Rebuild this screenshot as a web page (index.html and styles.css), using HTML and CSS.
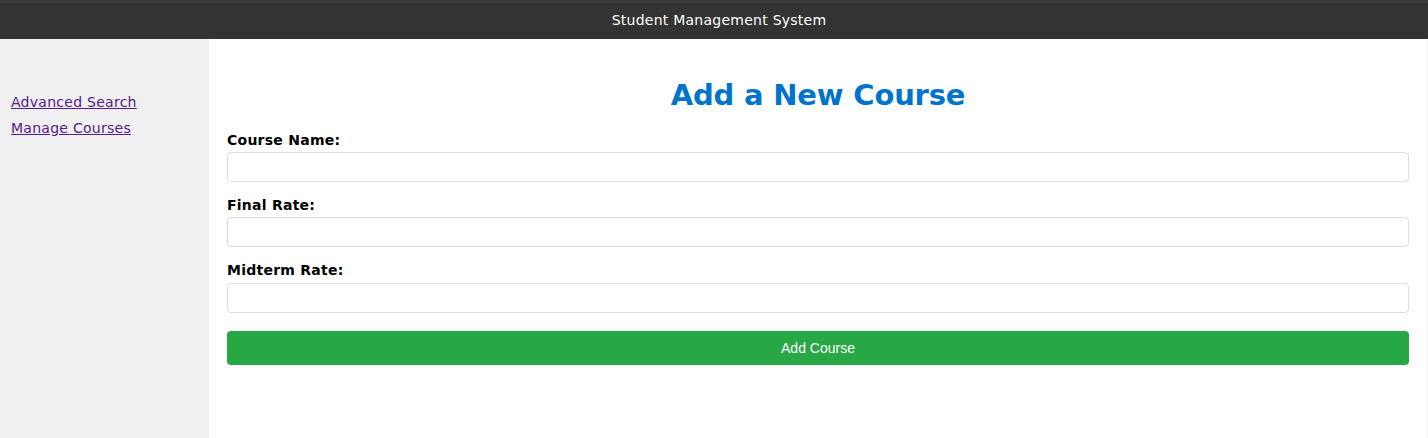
FILE: index.html
```html
<!DOCTYPE html>
<html>
<head>
<meta charset="utf-8">
<title>Add a New Course</title>
<link rel="stylesheet" href="styles.css">
</head>
<body>
<header class="topbar">Student Management System</header>
<div class="layout">
  <nav class="sidebar">
    <a href="#" class="nav-link">Advanced Search</a>
    <a href="#" class="nav-link">Manage Courses</a>
  </nav>
  <main class="content">
    <h1 class="title">Add a New Course</h1>
    <form class="course-form">
      <label class="field-label" for="cname">Course Name:</label>
      <input class="field-input" id="cname" type="text">
      <label class="field-label" for="frate">Final Rate:</label>
      <input class="field-input" id="frate" type="text">
      <label class="field-label" for="mrate">Midterm Rate:</label>
      <input class="field-input" id="mrate" type="text">
      <button class="submit-btn" type="button">Add Course</button>
    </form>
  </main>
</div>
</body>
</html>
```
FILE: styles.css
```css
* { box-sizing: border-box; }
html, body { margin: 0; padding: 0; height: 100%; }
body {
  font-family: "DejaVu Sans", Verdana, sans-serif;
  background: #fff;
  display: flex;
  flex-direction: column;
}
.topbar {
  height: 39px;
  background: #333;
  border-top: 3px solid #3b3b3b;
  color: #fff;
  font-size: 14px;
  letter-spacing: 0.25px;
  display: flex;
  align-items: center;
  justify-content: center;
  padding: 0 0 3px 10px;
}
.layout {
  flex: 1;
  display: flex;
}
.sidebar {
  width: 209px;
  background: #f0f0f0;
  padding: 53px 11px 0;
  display: flex;
  flex-direction: column;
  gap: 5px;
}
.nav-link {
  color: #551a8b;
  font-size: 14px;
  letter-spacing: 0.27px;
  line-height: 21px;
  align-self: flex-start;
}
.content {
  flex: 1;
  padding: 0 18px;
  border-right: 1px solid #f5f5f5;
}
.title {
  margin: 38px 0 19px;
  text-align: center;
  color: #0074cc;
  font-size: 29px;
  letter-spacing: -0.2px;
  font-weight: bold;
  line-height: 36px;
}
.course-form {
  display: flex;
  flex-direction: column;
}
.field-label {
  font-size: 14px;
  letter-spacing: 0.25px;
  font-weight: bold;
  color: #000;
  line-height: 17px;
  margin-bottom: 3px;
}
.field-input {
  height: 30px;
  border: 1px solid #ddd;
  border-radius: 4px;
  margin-bottom: 15px;
  font-size: 14px;
  padding: 0 8px;
}
.field-input:last-of-type {
  margin-top: 1px;
  margin-bottom: 18px;
}
.submit-btn {
  height: 34px;
  border: none;
  border-radius: 4px;
  background: #28a745;
  color: #fff;
  font-family: "Liberation Sans", Arial, sans-serif;
  font-size: 14px;
}
```
